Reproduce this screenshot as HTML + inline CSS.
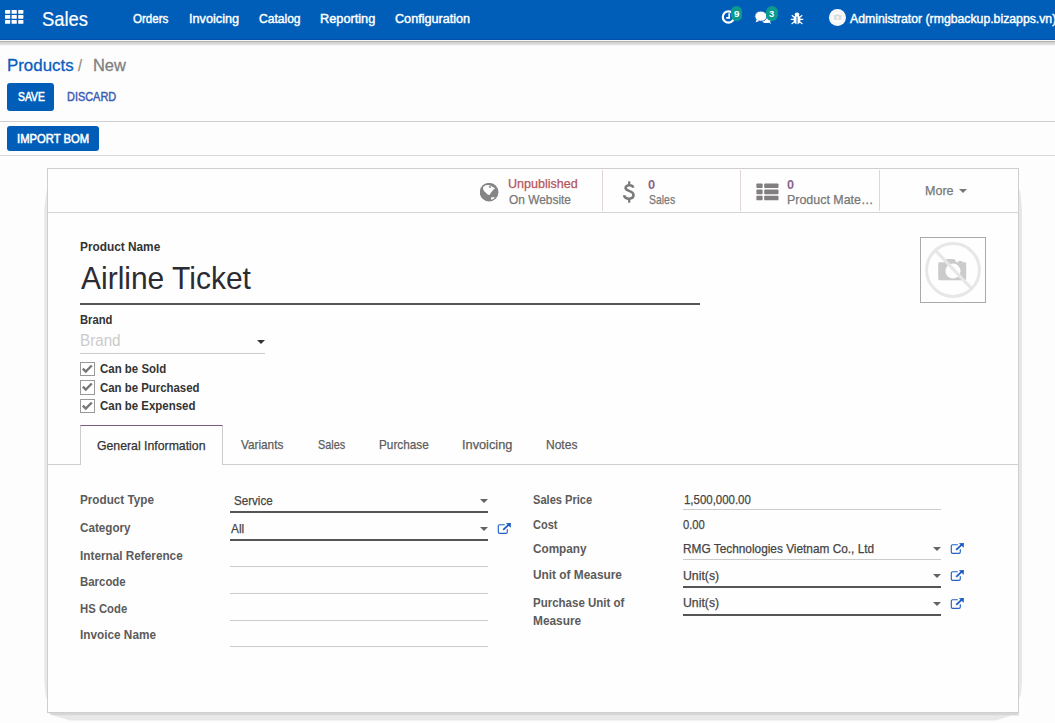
<!DOCTYPE html>
<html><head><meta charset="utf-8"><title>Products - Odoo</title>
<style>
html,body{margin:0;padding:0;}
body{width:1055px;height:723px;overflow:hidden;position:relative;background:#fdfdfd;font-family:"Liberation Sans", sans-serif;}
.t{position:absolute;white-space:nowrap;line-height:1;transform-origin:0 0;display:block;}
.a{position:absolute;}
</style></head><body>
<!-- NAVBAR -->
<div class="a" style="left:0;top:0;width:1055px;height:40px;background:#005eb8;"></div>
<div class="a" style="left:0;top:39px;width:1055px;height:1px;background:#0050ae;"></div>
<div class="a" style="left:0;top:40px;width:1055px;height:1px;background:#fdfaf6;"></div>
<div class="a" style="left:0;top:41px;width:1055px;height:5px;background:linear-gradient(#b0b0b0 0,#b0b0b0 20%,#d2d2d2 21%,#d8d8d8 60%,#ececec 80%,#fdfdfd 100%);"></div>
<!-- apps grid icon -->
<svg class="a" style="left:5px;top:10px" width="19" height="14" viewBox="0 0 19 14"><g fill="#fff">
<rect x="0" y="0" width="5.2" height="3.8" rx=".6"/><rect x="6.6" y="0" width="5.2" height="3.8" rx=".6"/><rect x="13.2" y="0" width="5.2" height="3.8" rx=".6"/>
<rect x="0" y="5" width="5.2" height="3.8" rx=".6"/><rect x="6.6" y="5" width="5.2" height="3.8" rx=".6"/><rect x="13.2" y="5" width="5.2" height="3.8" rx=".6"/>
<rect x="0" y="10" width="5.2" height="3.8" rx=".6"/><rect x="6.6" y="10" width="5.2" height="3.8" rx=".6"/><rect x="13.2" y="10" width="5.2" height="3.8" rx=".6"/>
</g></svg>
<!-- systray: clock -->
<svg class="a" style="left:721px;top:10px" width="16" height="16" viewBox="0 0 16 16">
<circle cx="7.400" cy="7.050" r="5.600" fill="none" stroke="#fff" stroke-width="2.200"/>
<path d="M8.200 3.200v4.600H5.200" fill="none" stroke="#fff" stroke-width="1.700"/></svg>
<div class="a" style="left:731px;top:6.2px;width:11.2px;height:14.4px;border-radius:5.6px;background:#0b9a8e;"></div>
<!-- systray: chat -->
<svg class="a" style="left:754px;top:10px" width="19" height="16" viewBox="0 0 19 16"><g fill="#fff">
<ellipse cx="12.300" cy="9.700" rx="4.500" ry="3.400"/><path d="M14.200 12L17 14 15.800 11z"/>
<ellipse cx="6.900" cy="6.200" rx="6.100" ry="5.100" stroke="#005eb8" stroke-width=".9"/><path d="M2.700 9.300L1.600 12.200 5.400 11z"/></g></svg>
<div class="a" style="left:766.2px;top:6.2px;width:12px;height:14.4px;border-radius:6px;background:#0b9a8e;"></div>
<!-- systray: bug -->
<svg class="a" style="left:790.2px;top:11.9px" width="14" height="13" viewBox="0 0 14 13"><g fill="#fff">
<ellipse cx="7" cy="7.6" rx="3.4" ry="4.6"/><ellipse cx="7" cy="2.4" rx="2.3" ry="1.9"/></g>
<g stroke="#fff" stroke-width="1.2" fill="none"><path d="M0.8 7.4h12.4M1.8 3.2l3 2.6M12.2 3.2l-3 2.6M1.6 12l3-2.6M12.4 12l-3-2.6"/></g>
<path d="M7 4.6v7.4" stroke="#005eb8" stroke-width="1"/></svg>
<!-- avatar -->
<svg class="a" style="left:828px;top:8px" width="19" height="19" viewBox="0 0 19 19"><circle cx="9.450" cy="9.400" r="8.500" fill="#fdfdfd"/>
<circle cx="9.450" cy="9.400" r="6.600" fill="none" stroke="#f1f1f1" stroke-width="1.200"/>
<path d="M5.900 7.100h1.600l.7-.9h2.500l.7.900h2v4.700h-7.500z" fill="#d9d9d9"/><circle cx="9.600" cy="9.500" r="1.400" fill="#f6f6f6"/></svg>

<!-- CONTROL PANEL -->
<div class="a" style="left:7px;top:83px;width:47px;height:28px;border-radius:3px;background:#005eb8;"></div>
<div class="a" style="left:0;top:121px;width:1055px;height:1px;background:#cfcfcf;"></div>
<div class="a" style="left:7px;top:126px;width:92px;height:25px;border-radius:3px;background:#005eb8;"></div>
<div class="a" style="left:0;top:155px;width:1055px;height:1px;background:#d8d8d8;"></div>

<!-- SHEET -->
<svg class="a" style="left:40px;top:160px" width="990" height="563" viewBox="40 160 990 563">
<path d="M48 190L46.800 190 45.800 196 44.300 209 44.300 681 45.600 695 48 704z" fill="#e7e7e7"/>
<path d="M1018 190L1019.800 190 1020.800 196 1022 209 1022 681 1020.800 695 1018 701z" fill="#e7e7e7"/>
<path d="M47 712H1019V715.400L1012 715.600 996 720.600H70L54 715.600 47 712z" fill="#e8e8e8"/>
<path d="M47.500 712H1018.500V715.300H52z" fill="#d6d6d6"/>
</svg>
<div class="a" style="left:47px;top:168px;width:970px;height:543px;background:#fefefe;border:1px solid #cfcfcf;"></div>
<!-- button box -->
<div class="a" style="left:48px;top:212px;width:970px;height:1px;background:#d4d4d4;"></div>
<div class="a" style="left:602px;top:170px;width:1px;height:41px;background:#e3d4d4;"></div>
<div class="a" style="left:740px;top:170px;width:1px;height:41px;background:#e3d4d4;"></div>
<div class="a" style="left:879px;top:170px;width:1px;height:41px;background:#e3d4d4;"></div>
<!-- globe -->
<svg class="a" style="left:480px;top:183px" width="19" height="19" viewBox="0 0 19 19"><circle cx="9.1" cy="9.2" r="9.3" fill="#858585"/>
<path d="M3.100 3.900L5.600 2.200 8.300 2.100 10.600 2.700 15.100 5.300 13.400 6.700 10.700 9.900 9.600 12.100 7.500 11.600 6.700 10.400 4.400 8.500 3.100 6.200z" fill="#fefefe"/>
<ellipse cx="9.9" cy="3.9" rx="1.2" ry=".8" fill="#858585" transform="rotate(25 9.9 3.9)"/>
<path d="M11 14.400L14.900 14 13.400 15.900 11.200 16.700z" fill="#fefefe"/></svg>
<!-- dollar -->
<svg class="a" style="left:621.5px;top:181px" width="14" height="22" viewBox="0 0 14 22"><path d="M11.300 6.700C10.800 5.100 9.400 4.300 7.300 4.300 5.200 4.300 3.600 5.300 3.600 7c0 3.700 7.900 2 7.900 7.100 0 2.200-1.900 3.600-4.500 3.600-2.700 0-4.500-1.200-5-3.400" fill="none" stroke="#7a7a7a" stroke-width="2.600"/><path d="M7.200 0.200v4M7.200 18v3.800" stroke="#7a7a7a" stroke-width="2.200"/></svg>
<!-- list -->
<svg class="a" style="left:755.5px;top:182.5px" width="23" height="18" viewBox="0 0 23 18"><g fill="#807e7e">
<rect x=".4" y=".4" width="6.200" height="4.600" rx=".9"/><rect x="8.200" y=".4" width="14.300" height="4.600" rx=".9"/>
<rect x=".4" y="6.550" width="6.200" height="4.700" rx=".9"/><rect x="8.200" y="6.550" width="14.300" height="4.700" rx=".9"/>
<rect x=".4" y="12.700" width="6.200" height="4.600" rx=".9"/><rect x="8.200" y="12.700" width="14.300" height="4.600" rx=".9"/></g></svg>
<!-- more caret -->
<svg class="a" style="left:958.5px;top:189px" width="8" height="4" viewBox="0 0 8 4"><path d="M0 0h8L4 4z" fill="#777"/></svg>

<!-- image placeholder -->
<div class="a" style="left:920px;top:237px;width:64px;height:64px;border:1px solid #aaa;background:#fefefe;"></div>
<svg class="a" style="left:921px;top:238px" width="64" height="64" viewBox="0 0 64 64">
<path d="M18.600 24.200h4.400l1.600-2.600q.5-.6 1.400-.6h6.400q.9 0 1.400.6l1.600 2.600h1.800v-.8q0-.5.500-.5h3.300q.5 0 .5.500v.8h2.300q1.400 0 1.400 1.400v15.200q0 1.400-1.400 1.400h-25.200q-1.400 0-1.400-1.400v-15.200q0-1.400 1.400-1.400z" fill="#cbcbcb"/>
<circle cx="32" cy="33" r="7.600" fill="#fefefe"/>
<circle cx="32" cy="32" r="26.4" fill="none" stroke="#e7e7e7" stroke-width="3"/>
<path d="M14.5 12.5L50.5 50.5" stroke="#e7e7e7" stroke-width="3.2"/></svg>

<!-- title underline -->
<div class="a" style="left:80px;top:303px;width:620px;height:2px;background:#555;"></div>
<!-- brand field -->
<svg class="a" style="left:257px;top:340px" width="8" height="4" viewBox="0 0 8 4"><path d="M0 0h8L4 4z" fill="#333"/></svg>
<div class="a" style="left:80px;top:353px;width:185px;height:1px;background:#ccc;"></div>
<!-- checkboxes -->
<div class="a" style="left:80px;top:361.5px;width:12.5px;height:12.5px;border:1px solid #999;background:#fff;"></div>
<div class="a" style="left:80px;top:380px;width:12.5px;height:12.5px;border:1px solid #999;background:#fff;"></div>
<div class="a" style="left:80px;top:398.5px;width:12.5px;height:12.5px;border:1px solid #999;background:#fff;"></div>
<svg class="a" style="left:80px;top:361.5px" width="15" height="15" viewBox="0 0 15 15"><path d="M2.800 6.600L5.800 9.600 11.800 3.500" fill="none" stroke="#777" stroke-width="2.400"/></svg>
<svg class="a" style="left:80px;top:380px" width="15" height="15" viewBox="0 0 15 15"><path d="M2.800 6.600L5.800 9.600 11.800 3.500" fill="none" stroke="#777" stroke-width="2.400"/></svg>
<svg class="a" style="left:80px;top:398.5px" width="15" height="15" viewBox="0 0 15 15"><path d="M2.800 6.600L5.800 9.600 11.800 3.500" fill="none" stroke="#777" stroke-width="2.400"/></svg>

<!-- tabs -->
<div class="a" style="left:48px;top:464px;width:970px;height:1px;background:#d0d0d0;"></div>
<div class="a" style="left:80px;top:425px;width:141px;height:39px;background:#fefefe;border-left:1px solid #ccc;border-right:1px solid #ccc;border-top:1px solid #7c5a82;"></div>

<!-- fields left -->
<div class="a" style="left:230px;top:510.5px;width:258px;height:2px;background:#555;"></div>
<div class="a" style="left:230px;top:539px;width:258px;height:2px;background:#555;"></div>
<div class="a" style="left:230px;top:566px;width:258px;height:1px;background:#ccc;"></div>
<div class="a" style="left:230px;top:593px;width:258px;height:1px;background:#ccc;"></div>
<div class="a" style="left:230px;top:620px;width:258px;height:1px;background:#ccc;"></div>
<div class="a" style="left:230px;top:646px;width:258px;height:1px;background:#ccc;"></div>
<svg class="a" style="left:480.2px;top:499px" width="8" height="4" viewBox="0 0 8 4"><path d="M0 0h8L4 4z" fill="#636363"/></svg>
<svg class="a" style="left:480.2px;top:527px" width="8" height="4" viewBox="0 0 8 4"><path d="M0 0h8L4 4z" fill="#636363"/></svg>
<!-- fields right -->
<div class="a" style="left:683px;top:509px;width:258px;height:1px;background:#ccc;"></div>
<div class="a" style="left:683px;top:559px;width:258px;height:1px;background:#ccc;"></div>
<div class="a" style="left:683px;top:586px;width:258px;height:2px;background:#555;"></div>
<div class="a" style="left:683px;top:614px;width:258px;height:2px;background:#555;"></div>
<svg class="a" style="left:933px;top:547px" width="8" height="4" viewBox="0 0 8 4"><path d="M0 0h8L4 4z" fill="#636363"/></svg>
<svg class="a" style="left:933px;top:574px" width="8" height="4" viewBox="0 0 8 4"><path d="M0 0h8L4 4z" fill="#636363"/></svg>
<svg class="a" style="left:933px;top:602px" width="8" height="4" viewBox="0 0 8 4"><path d="M0 0h8L4 4z" fill="#636363"/></svg>
<!-- external link icons -->
<svg class="a ext" style="left:497px;top:523px" width="15" height="12" viewBox="0 0 15 12"><path d="M7.800 1.750H2.700a1.400 1.400 0 0 0-1.400 1.400V8.900a1.400 1.400 0 0 0 1.400 1.400H8.900a1.400 1.400 0 0 0 1.400-1.400V6.300" fill="none" stroke="#2160c6" stroke-width="1.15"/><path d="M6.200 6.900L12 1.400" stroke="#1b5cc4" stroke-width="1.8"/><path d="M8.900 0.200L13.900 0 13.700 4.700z" fill="#1b5cc4"/></svg>
<svg class="a ext" style="left:950px;top:543px" width="15" height="12" viewBox="0 0 15 12"><path d="M7.800 1.750H2.700a1.400 1.400 0 0 0-1.400 1.400V8.900a1.400 1.400 0 0 0 1.400 1.400H8.900a1.400 1.400 0 0 0 1.400-1.400V6.300" fill="none" stroke="#2160c6" stroke-width="1.15"/><path d="M6.200 6.900L12 1.400" stroke="#1b5cc4" stroke-width="1.8"/><path d="M8.900 0.200L13.900 0 13.700 4.700z" fill="#1b5cc4"/></svg>
<svg class="a ext" style="left:950px;top:570px" width="15" height="12" viewBox="0 0 15 12"><path d="M7.800 1.750H2.700a1.400 1.400 0 0 0-1.400 1.400V8.900a1.400 1.400 0 0 0 1.400 1.400H8.900a1.400 1.400 0 0 0 1.400-1.400V6.300" fill="none" stroke="#2160c6" stroke-width="1.15"/><path d="M6.200 6.900L12 1.400" stroke="#1b5cc4" stroke-width="1.8"/><path d="M8.900 0.200L13.900 0 13.700 4.700z" fill="#1b5cc4"/></svg>
<svg class="a ext" style="left:950px;top:598px" width="15" height="12" viewBox="0 0 15 12"><path d="M7.800 1.750H2.700a1.400 1.400 0 0 0-1.400 1.400V8.900a1.400 1.400 0 0 0 1.400 1.400H8.900a1.400 1.400 0 0 0 1.400-1.400V6.300" fill="none" stroke="#2160c6" stroke-width="1.15"/><path d="M6.200 6.900L12 1.400" stroke="#1b5cc4" stroke-width="1.8"/><path d="M8.900 0.200L13.900 0 13.700 4.700z" fill="#1b5cc4"/></svg>

<span class="t" style="left:41.60px;top:9.40px;font-size:20.6px;font-weight:400;color:#fff;transform:scaleX(0.8942);-webkit-text-stroke:0.2px #fff;">Sales</span>
<span class="t" style="left:733.90px;top:10.20px;font-size:9px;font-weight:700;color:#fff;transform:scaleX(1.1000);">9</span>
<span class="t" style="left:769.30px;top:10.20px;font-size:9px;font-weight:700;color:#fff;transform:scaleX(1.0400);">3</span>
<span class="t" style="left:132.97px;top:12.40px;font-size:13.6px;font-weight:400;color:#fff;transform:scaleX(0.8515);-webkit-text-stroke:0.45px #fff;">Orders</span>
<span class="t" style="left:188.99px;top:12.40px;font-size:13.6px;font-weight:400;color:#fff;transform:scaleX(0.9330);-webkit-text-stroke:0.45px #fff;">Invoicing</span>
<span class="t" style="left:259.48px;top:12.40px;font-size:13.6px;font-weight:400;color:#fff;transform:scaleX(0.8867);-webkit-text-stroke:0.45px #fff;">Catalog</span>
<span class="t" style="left:320.04px;top:12.40px;font-size:13.6px;font-weight:400;color:#fff;transform:scaleX(0.9376);-webkit-text-stroke:0.45px #fff;">Reporting</span>
<span class="t" style="left:395.23px;top:12.40px;font-size:13.6px;font-weight:400;color:#fff;transform:scaleX(0.9284);-webkit-text-stroke:0.45px #fff;">Configuration</span>
<span class="t" style="left:849.83px;top:12.40px;font-size:13.6px;font-weight:400;color:#fff;transform:scaleX(0.9009);-webkit-text-stroke:0.45px #fff;">Administrator (rmgbackup.bizapps.vn)</span>
<span class="t" style="left:6.87px;top:56.70px;font-size:17.2px;font-weight:400;color:#0a5dc0;transform:scaleX(0.9814);-webkit-text-stroke:0.3px #0a5dc0;">Products</span>
<span class="t" style="left:78.42px;top:56.70px;font-size:17.2px;font-weight:400;color:#8c8c8c;transform:scaleX(0.8500);-webkit-text-stroke:0.25px #8c8c8c;">/</span>
<span class="t" style="left:93.39px;top:56.70px;font-size:17.2px;font-weight:400;color:#808080;transform:scaleX(0.9567);-webkit-text-stroke:0.3px #808080;">New</span>
<span class="t" style="left:17.77px;top:90.50px;font-size:12.4px;font-weight:400;color:#fff;transform:scaleX(0.8361);-webkit-text-stroke:0.55px #fff;">SAVE</span>
<span class="t" style="left:66.84px;top:90.50px;font-size:12.4px;font-weight:400;color:#3b5cb4;transform:scaleX(0.8820);-webkit-text-stroke:0.45px #3b5cb4;">DISCARD</span>
<span class="t" style="left:16.87px;top:132.50px;font-size:12.4px;font-weight:400;color:#fff;transform:scaleX(0.9086);-webkit-text-stroke:0.55px #fff;">IMPORT BOM</span>
<span class="t" style="left:508.41px;top:177.25px;font-size:13px;font-weight:400;color:#b4555c;transform:scaleX(0.9642);-webkit-text-stroke:0.25px #b4555c;">Unpublished</span>
<span class="t" style="left:509.38px;top:193.25px;font-size:13px;font-weight:400;color:#777;transform:scaleX(0.9155);-webkit-text-stroke:0.25px #777;">On Website</span>
<span class="t" style="left:648.30px;top:178.10px;font-size:13px;font-weight:700;color:#8a648c;transform:scaleX(0.9857);">0</span>
<span class="t" style="left:648.88px;top:193.25px;font-size:13px;font-weight:400;color:#777;transform:scaleX(0.8026);-webkit-text-stroke:0.25px #777;">Sales</span>
<span class="t" style="left:787.00px;top:178.10px;font-size:13px;font-weight:700;color:#8a648c;transform:scaleX(0.9714);">0</span>
<span class="t" style="left:786.57px;top:193.25px;font-size:13px;font-weight:400;color:#777;transform:scaleX(0.9562);-webkit-text-stroke:0.25px #777;">Product Mate…</span>
<span class="t" style="left:924.56px;top:183.50px;font-size:13px;font-weight:400;color:#777;transform:scaleX(0.9634);-webkit-text-stroke:0.25px #777;">More</span>
<span class="t" style="left:80.00px;top:240.00px;font-size:13px;font-weight:700;color:#333;transform:scaleX(0.9101);">Product Name</span>
<span class="t" style="left:81.25px;top:263.30px;font-size:31.2px;font-weight:400;color:#2b2b33;transform:scaleX(0.9610);">Airline Ticket</span>
<span class="t" style="left:80.00px;top:313.25px;font-size:13px;font-weight:700;color:#333;transform:scaleX(0.8639);">Brand</span>
<span class="t" style="left:79.80px;top:333.25px;font-size:16px;font-weight:400;color:#cbcbcb;transform:scaleX(0.9498);">Brand</span>
<span class="t" style="left:100.00px;top:362.00px;font-size:13px;font-weight:700;color:#333;transform:scaleX(0.8813);">Can be Sold</span>
<span class="t" style="left:100.00px;top:380.50px;font-size:13px;font-weight:700;color:#333;transform:scaleX(0.8768);">Can be Purchased</span>
<span class="t" style="left:100.00px;top:399.00px;font-size:13px;font-weight:700;color:#333;transform:scaleX(0.8808);">Can be Expensed</span>
<span class="t" style="left:97.12px;top:438.50px;font-size:13px;font-weight:400;color:#333;transform:scaleX(0.9441);-webkit-text-stroke:0.25px #333;">General Information</span>
<span class="t" style="left:240.88px;top:438.00px;font-size:13px;font-weight:400;color:#5c5c5c;transform:scaleX(0.9052);-webkit-text-stroke:0.25px #5c5c5c;">Variants</span>
<span class="t" style="left:318.32px;top:438.00px;font-size:13px;font-weight:400;color:#5c5c5c;transform:scaleX(0.8374);-webkit-text-stroke:0.25px #5c5c5c;">Sales</span>
<span class="t" style="left:379.02px;top:438.00px;font-size:13px;font-weight:400;color:#5c5c5c;transform:scaleX(0.9043);-webkit-text-stroke:0.25px #5c5c5c;">Purchase</span>
<span class="t" style="left:462.04px;top:438.00px;font-size:13px;font-weight:400;color:#5c5c5c;transform:scaleX(0.9815);-webkit-text-stroke:0.25px #5c5c5c;">Invoicing</span>
<span class="t" style="left:546.10px;top:438.00px;font-size:13px;font-weight:400;color:#5c5c5c;transform:scaleX(0.9250);-webkit-text-stroke:0.25px #5c5c5c;">Notes</span>
<span class="t" style="left:80.00px;top:493.00px;font-size:13px;font-weight:700;color:#5b5b5b;transform:scaleX(0.9008);">Product Type</span>
<span class="t" style="left:80.00px;top:521.00px;font-size:13px;font-weight:700;color:#5b5b5b;transform:scaleX(0.8973);">Category</span>
<span class="t" style="left:80.00px;top:549.00px;font-size:13px;font-weight:700;color:#5b5b5b;transform:scaleX(0.9055);">Internal Reference</span>
<span class="t" style="left:80.00px;top:575.00px;font-size:13px;font-weight:700;color:#5b5b5b;transform:scaleX(0.8786);">Barcode</span>
<span class="t" style="left:80.00px;top:601.50px;font-size:13px;font-weight:700;color:#5b5b5b;transform:scaleX(0.8713);">HS Code</span>
<span class="t" style="left:80.00px;top:628.00px;font-size:13px;font-weight:700;color:#5b5b5b;transform:scaleX(0.9063);">Invoice Name</span>
<span class="t" style="left:233.88px;top:494.00px;font-size:13px;font-weight:400;color:#444;transform:scaleX(0.8929);-webkit-text-stroke:0.25px #444;">Service</span>
<span class="t" style="left:230.88px;top:522.00px;font-size:13px;font-weight:400;color:#444;transform:scaleX(0.9101);-webkit-text-stroke:0.25px #444;">All</span>
<span class="t" style="left:532.50px;top:493.00px;font-size:13px;font-weight:700;color:#5b5b5b;transform:scaleX(0.8531);">Sales Price</span>
<span class="t" style="left:532.50px;top:517.75px;font-size:13px;font-weight:700;color:#5b5b5b;transform:scaleX(0.8458);">Cost</span>
<span class="t" style="left:532.50px;top:542.00px;font-size:13px;font-weight:700;color:#5b5b5b;transform:scaleX(0.9042);">Company</span>
<span class="t" style="left:532.50px;top:567.75px;font-size:13px;font-weight:700;color:#5b5b5b;transform:scaleX(0.9123);">Unit of Measure</span>
<span class="t" style="left:532.50px;top:595.50px;font-size:13px;font-weight:700;color:#5b5b5b;transform:scaleX(0.8849);">Purchase Unit of</span>
<span class="t" style="left:532.50px;top:613.50px;font-size:13px;font-weight:700;color:#5b5b5b;transform:scaleX(0.9140);">Measure</span>
<span class="t" style="left:683.83px;top:493.00px;font-size:13px;font-weight:400;color:#444;transform:scaleX(0.8807);-webkit-text-stroke:0.25px #444;">1,500,000.00</span>
<span class="t" style="left:683.23px;top:517.50px;font-size:13px;font-weight:400;color:#444;transform:scaleX(0.8635);-webkit-text-stroke:0.25px #444;">0.00</span>
<span class="t" style="left:682.91px;top:542.20px;font-size:13px;font-weight:400;color:#444;transform:scaleX(0.9112);-webkit-text-stroke:0.25px #444;">RMG Technologies Vietnam Co., Ltd</span>
<span class="t" style="left:682.88px;top:568.70px;font-size:13px;font-weight:400;color:#444;transform:scaleX(0.9432);-webkit-text-stroke:0.25px #444;">Unit(s)</span>
<span class="t" style="left:682.88px;top:596.40px;font-size:13px;font-weight:400;color:#444;transform:scaleX(0.9432);-webkit-text-stroke:0.25px #444;">Unit(s)</span>
</body></html>
